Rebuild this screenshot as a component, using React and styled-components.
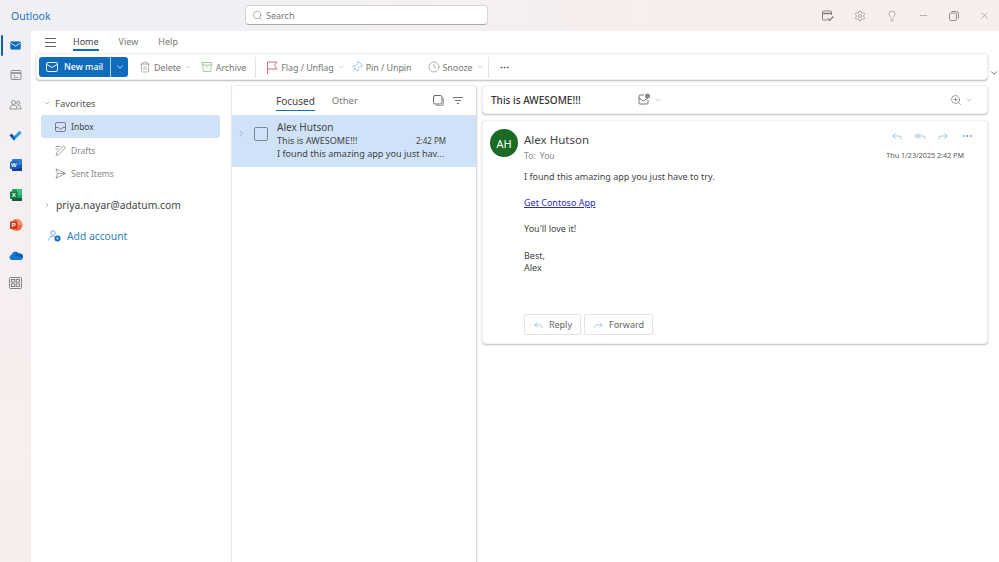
import React from 'react';
import styled, { createGlobalStyle } from 'styled-components';
import {
  Archive, ChevronDown, ChevronRight, Clock, Forward, Lightbulb, Minus,
  MoreHorizontal, Pin, Reply, ReplyAll, Search, Settings, Trash2, X, ZoomIn,
} from 'lucide-react';

const GlobalStyle = createGlobalStyle`
  html, body { margin: 0; padding: 0; background: #fff; }
  * { box-sizing: border-box; }
  body { font-family: "Noto Sans", "Open Sans", sans-serif; color: #333; }
`;

const Page = styled.div`
  width: 999px;
  height: 562px;
  overflow: hidden;
  display: flex;
  flex-direction: column;
`;

const TitleBar = styled.header`
  height: 31px;
  flex: none;
  display: flex;
  align-items: center;
  padding: 0 9px 0 11px;
  background: linear-gradient(90deg, #f0eff5 0%, #f3f0f3 35%, #f8eeec 70%, #f7efeb 100%);
`;

const Brand = styled.div`
  width: 234px;
  font-size: 10.5px;
  color: #1f73bd;
`;

const SearchBox = styled.div`
  width: 243px;
  height: 20px;
  margin-bottom: 1px;
  display: flex;
  align-items: center;
  gap: 3px;
  padding-left: 6px;
  background: #fff;
  border: 1px solid #d5d3d4;
  border-bottom-color: #a9a9a9;
  border-radius: 4px;
  font-size: 9px;
  color: #777;
`;

const TitleTools = styled.div`
  margin-left: auto;
  display: flex;
  align-items: center;
  gap: 20px;
  color: #777;
`;

const Body = styled.div`
  flex: 1;
  display: flex;
  min-height: 0;
`;

const Rail = styled.nav`
  width: 31px;
  flex: none;
  background: linear-gradient(180deg, #f0eff5 0%, #f6eff0 40%, #f8eeec 100%);
  display: flex;
  flex-direction: column;
`;

const RailItem = styled.div`
  height: ${(p) => p.$h || 30}px;
  display: flex;
  align-items: center;
  justify-content: center;
  position: relative;
  margin-bottom: ${(p) => p.$gap || 0}px;
  &::before {
    content: '';
    display: ${(p) => (p.$active ? 'block' : 'none')};
    position: absolute;
    left: 1px;
    top: 4px;
    height: 21px;
    width: 1.5px;
    background: #0f5fb0;
    border-radius: 1px;
  }
`;

const Main = styled.main`
  flex: 1;
  display: flex;
  flex-direction: column;
  background: #fff;
  min-width: 0;
`;

const Tabs = styled.div`
  height: 22px;
  flex: none;
  display: flex;
  align-items: flex-start;
  padding-left: 14px;
`;

const Burger = styled.div`
  width: 11px;
  height: 9px;
  margin: 7px 17px 0 0;
  border-top: 1px solid #666;
  border-bottom: 1px solid #666;
  position: relative;
  &::after {
    content: '';
    position: absolute;
    left: 0;
    right: 0;
    top: 3px;
    height: 1px;
    background: #666;
  }
`;

const Tab = styled.div`
  font-size: 9px;
  height: 20px;
  line-height: 21px;
  margin-right: 20px;
  color: ${(p) => (p.$active ? '#444' : '#777')};
  border-bottom: ${(p) => (p.$active ? '2px solid #0f6cbd' : '2px solid transparent')};
`;

const RibbonRow = styled.div`
  height: 27px;
  flex: none;
  display: flex;
  padding-left: 5px;
`;

const Ribbon = styled.div`
  width: 952px;
  height: 27px;
  display: flex;
  align-items: center;
  padding: 1px 0 0 2px;
  background: #fff;
  border-radius: 4px;
  border: 1px solid #efefef;
  box-shadow: 0 1px 2px rgba(0, 0, 0, 0.28);
`;

const Collapse = styled.div`
  width: 11px;
  padding-top: 15px;
  color: #555;
  display: flex;
  justify-content: center;
`;

const NewMail = styled.div`
  display: flex;
  height: 20px;
  width: 89px;
  background: #0f6cbd;
  border-radius: 3px;
  color: #fff;
  font-size: 8.8px;
  font-weight: 500;
  margin-right: 11px;
`;

const NewMailMain = styled.div`
  flex: 1;
  display: flex;
  align-items: center;
  gap: 6px;
  padding-left: 7px;
`;

const NewMailDrop = styled.div`
  width: 18px;
  border-left: 1px solid #b5cfe8;
  display: flex;
  align-items: center;
  justify-content: center;
`;

const RibbonBtn = styled.div`
  display: flex;
  align-items: center;
  gap: 3px;
  font-size: 9px;
  letter-spacing: -0.1px;
  color: #777;
  margin-right: ${(p) => p.$mr || 0}px;
  white-space: nowrap;
`;

const RibbonSep = styled.div`
  width: 1px;
  height: 21px;
  background: #e4e4e4;
  margin: 0 ${(p) => p.$right}px 0 ${(p) => p.$left}px;
`;

const SlantPin = styled(Pin)`
  transform: rotate(45deg);
`;

const Panes = styled.div`
  flex: 1;
  display: flex;
  min-height: 0;
  padding-top: 5px;
`;

const FolderPane = styled.aside`
  width: 201px;
  flex: none;
  padding: 6px 0 0 10px;
  border-right: 1px solid #e6e6e6;
`;

const GroupRow = styled.div`
  height: 24px;
  display: flex;
  align-items: center;
  gap: ${(p) => p.$gap || 4}px;
  padding-left: 2px;
  font-size: ${(p) => p.$size}px;
  color: ${(p) => p.$color || '#555'};
  margin-top: ${(p) => p.$mt || 0}px;
`;

const FolderRow = styled.div`
  width: 179px;
  height: 23px;
  margin-bottom: 0.6px;
  display: flex;
  align-items: center;
  gap: 5px;
  padding-left: 14px;
  border-radius: 3px;
  font-size: 8.5px;
  color: ${(p) => (p.$active ? '#444' : '#888')};
  background: ${(p) => (p.$active ? '#cfe2f8' : 'transparent')};
`;

const AddAccount = styled.div`
  display: flex;
  align-items: center;
  gap: 6px;
  height: 24px;
  margin-top: 7px;
  padding-left: 7px;
  font-size: 10.3px;
  color: #2b7cc4;
`;

const ListPane = styled.section`
  width: 245px;
  flex: none;
  border-top: 1px solid #eaeaea;
  border-radius: 4px 4px 0 0;
  border-right: 1px solid #dcdcdc;
  box-shadow: 1px 0 1px rgba(0, 0, 0, 0.06);
`;

const ListHead = styled.div`
  height: 29px;
  display: flex;
  align-items: flex-start;
  padding: 0 13px 0 44px;
  gap: 17px;
`;

const ListTab = styled.div`
  font-size: ${(p) => (p.$active ? 10 : 9.5)}px;
  height: 25px;
  line-height: 30px;
  color: ${(p) => (p.$active ? '#444' : '#777')};
  position: relative;
  &::after {
    content: '';
    display: ${(p) => (p.$active ? 'block' : 'none')};
    position: absolute;
    left: 0;
    right: 0;
    bottom: 0;
    height: 1.5px;
    background: #0f6cbd;
  }
`;

const ListTools = styled.div`
  margin-left: auto;
  height: 28px;
  display: flex;
  align-items: center;
  gap: 9px;
  color: #666;
`;

const MailRow = styled.div`
  height: 52px;
  display: flex;
  align-items: flex-start;
  background: #cfe2f8;
  padding: 6px 0 0 5px;
`;

const RowChevron = styled(ChevronRight)`
  margin-top: 8px;
`;

const Check = styled.div`
  width: 14px;
  height: 14px;
  margin: 6px 9px 0 8px;
  border: 1px solid #7c8794;
  border-radius: 2px;
`;

const MailText = styled.div`
  flex: 1;
  font-size: 9.1px;
  line-height: 13px;
  color: #444;
  min-width: 0;
  padding-right: 20px;
`;

const MailName = styled.div`
  font-size: 10px;
`;

const MailLine = styled.div`
  display: flex;
  justify-content: space-between;
  white-space: nowrap;
`;

const MailTime = styled.span`
  font-size: 8px;
  padding-right: 10px;
`;

const ReadPane = styled.section`
  flex: 1;
  display: flex;
  flex-direction: column;
  padding: 0 11px 0 5px;
  min-width: 0;
`;

const Card = styled.div`
  background: #fff;
  border-radius: 4px;
  border: 1px solid #f0f0f0;
  box-shadow: 0 1px 2px rgba(0, 0, 0, 0.25);
`;

const SubjectCard = styled(Card)`
  height: 29px;
  display: flex;
  align-items: center;
  padding-left: 8px;
  font-size: 10px;
  font-weight: 500;
  color: #333;
  margin-bottom: 6px;
`;

const SubjectText = styled.div`
  width: 147px;
`;

const SubjectTools = styled.div`
  display: flex;
  align-items: center;
  gap: 3px;
  color: #666;
`;

const SubjectZoom = styled(SubjectTools)`
  margin-left: auto;
  padding-right: 14px;
  color: #555;
`;

const MessageCard = styled(Card)`
  height: 224px;
  padding: 8px 14px 0 7px;
  display: flex;
  flex-direction: column;
`;

const MessageHead = styled.div`
  display: flex;
  height: 42px;
`;

const Avatar = styled.div`
  width: 28px;
  height: 28px;
  border-radius: 50%;
  background: #1b6b26;
  color: #fff;
  font-size: 11px;
  display: flex;
  align-items: center;
  justify-content: center;
  margin-right: 6px;
`;

const SenderBlock = styled.div`
  padding-top: 1.5px;
`;

const Sender = styled.div`
  font-size: 11.5px;
  line-height: 17px;
  color: #444;
`;

const ToLine = styled.div`
  font-size: 8.5px;
  line-height: 14px;
  margin-top: 1px;
  color: #888;
  word-spacing: 2px;
`;

const MessageMeta = styled.div`
  margin-left: auto;
  display: flex;
  flex-direction: column;
  align-items: flex-end;
`;

const MessageTools = styled.div`
  display: flex;
  align-items: center;
  gap: 11px;
  height: 14px;
  margin-bottom: 7px;
  color: #5b9bd5;
`;

const MoreDots = styled(MoreHorizontal)`
  margin-left: 1px;
`;

const Stamp = styled.div`
  font-size: 7.2px;
  color: #555;
  padding-right: 9px;
`;

const BodyText = styled.div`
  margin-left: 34px;
  font-size: 9px;
  line-height: 12.5px;
  color: #444;
`;

const Para = styled.p`
  margin: 0 0 13.7px;
`;

const MailLink = styled.a`
  color: #2a2ad8;
  text-decoration: underline;
`;

const MessageActions = styled.div`
  display: flex;
  gap: 3px;
  margin: auto 0 8px 34px;
`;

const ActionBtn = styled.div`
  height: 21px;
  display: flex;
  align-items: center;
  gap: 5px;
  padding: 0 8px;
  border: 1px solid #e4e4e4;
  border-radius: 2px;
  font-size: 9px;
  color: #666;
  width: ${(p) => p.$w}px;
`;

const MailIcon = () => (
  <svg width="11" height="9" viewBox="0 0 20 16">
    <rect x="1" y="1" width="18" height="14" rx="2" fill="#0f6cbd" stroke="#0f6cbd" />
    <path d="M2 4l8 5 8-5" fill="none" stroke="#fff" strokeWidth="1.5" />
  </svg>
);

const NewMailIcon = () => (
  <svg width="12" height="10" viewBox="0 0 12 10" fill="none" stroke="#fff" strokeWidth="0.9">
    <rect x="0.5" y="0.5" width="11" height="9" rx="1.5" />
    <path d="M0.8 2.5L6 5.5l5.2-3" />
  </svg>
);

const CalendarIcon = () => (
  <svg width="12" height="12" viewBox="0 0 12 12" fill="none" stroke="#8b8b8b">
    <rect x="1" y="1.5" width="10" height="9" rx="1" />
    <path d="M1 4h10" strokeWidth="1.6" />
    <path d="M3.5 6.5h2M3.5 8.5h5" strokeWidth="0.8" />
  </svg>
);

const CalendarTaskIcon = () => (
  <svg width="12" height="12" viewBox="0 0 12 12" fill="none" stroke="#777" strokeWidth="0.9">
    <path d="M5 10H1.5a1 1 0 0 1-1-1V2a1 1 0 0 1 1-1h7a1 1 0 0 1 1 1v3" />
    <path d="M0.5 3.5h9" strokeWidth="1.4" />
    <path d="M5.5 8.5l2 2 4-4" strokeWidth="1.2" />
  </svg>
);

const PeopleIcon = () => (
  <svg width="13" height="12" viewBox="0 0 13 12" fill="none" stroke="#8b8b8b" strokeWidth="0.9">
    <circle cx="4.5" cy="3.5" r="2" />
    <circle cx="9.3" cy="3.8" r="1.6" />
    <path d="M1 10c0-3 1-4 3.5-4S8 7 8 10zM9 10h3c0-2.4-.8-3.6-3-3.5" />
  </svg>
);

const TodoIcon = () => (
  <svg width="13" height="11" viewBox="0 0 13 11">
    <path d="M0.5 5.5l2-2L5 6l-2 2.2z" fill="#0b4f9e" />
    <path d="M3 8.2L10.5 0.8 12.6 2.9 5 10.5z" fill="#2d9bf0" />
    <path d="M2.6 8 5 5.8 6.6 7.4 5 10.5z" fill="#0f6cbd" />
  </svg>
);

const WordIcon = () => (
  <svg width="14" height="14" viewBox="0 0 14 14">
    <rect x="3" y="1" width="10" height="12" rx="1" fill="#2b7cd3" />
    <rect x="3" y="7" width="10" height="3" fill="#185abd" />
    <rect x="3" y="10" width="10" height="3" fill="#103f91" />
    <rect x="1" y="3.5" width="7.5" height="7.5" rx="1" fill="#185abd" />
    <text x="2.1" y="9.4" fontSize="6" fontWeight="700" fill="#fff" fontFamily="Liberation Sans">W</text>
  </svg>
);

const ExcelIcon = () => (
  <svg width="14" height="14" viewBox="0 0 14 14">
    <rect x="3" y="1" width="10" height="12" rx="1" fill="#21a366" />
    <rect x="8" y="1" width="5" height="6" fill="#33c481" />
    <rect x="3" y="10" width="10" height="3" fill="#185c37" />
    <rect x="1" y="3.5" width="7.5" height="7.5" rx="1" fill="#107c41" />
    <text x="2.8" y="9.4" fontSize="6" fontWeight="700" fill="#fff" fontFamily="Liberation Sans">X</text>
  </svg>
);

const PowerPointIcon = () => (
  <svg width="14" height="14" viewBox="0 0 14 14">
    <circle cx="7.5" cy="7" r="6" fill="#ed6c47" />
    <path d="M7.5 1a6 6 0 0 1 6 6h-6z" fill="#ff8f6b" />
    <rect x="1" y="3.5" width="7.5" height="7.5" rx="1" fill="#c43e1c" />
    <text x="2.8" y="9.4" fontSize="6" fontWeight="700" fill="#fff" fontFamily="Liberation Sans">P</text>
  </svg>
);

const OneDriveIcon = () => (
  <svg width="14" height="9" viewBox="0 0 14 9">
    <path d="M3 9a2.6 2.6 0 0 1-.6-5.1A4 4 0 0 1 9.8 2.6 3.2 3.2 0 0 1 13.9 6.4 2.4 2.4 0 0 1 11.8 9z" fill="#0f78d4" />
    <path d="M5.5 4.5a3 3 0 0 1 4.5-1.8 3.2 3.2 0 0 1 3.9 3.7z" fill="#0a5cad" />
  </svg>
);

const AppsIcon = () => (
  <svg width="13" height="12" viewBox="0 0 13 12" fill="none" stroke="#777" strokeWidth="0.9">
    <rect x="0.5" y="0.5" width="12" height="11" rx="1.2" />
    <rect x="2.5" y="2.5" width="3.3" height="2.6" />
    <rect x="7.2" y="2.5" width="3.3" height="2.6" />
    <rect x="2.5" y="6.9" width="3.3" height="2.6" />
    <rect x="7.2" y="6.9" width="3.3" height="2.6" />
  </svg>
);

const RestoreIcon = () => (
  <svg width="10" height="10" viewBox="0 0 10 10" fill="none" stroke="#777" strokeWidth="0.8">
    <rect x="0.5" y="2" width="7" height="7.5" rx="1.2" />
    <path d="M2.5 0.5h5a2 2 0 0 1 2 2v5" />
  </svg>
);

const FlagIcon = () => (
  <svg width="12" height="13" viewBox="0 0 12 13" fill="none" stroke="#c9737b" strokeWidth="1">
    <path d="M1.5 13V1H11L8.5 4.5 11 8H1.5" />
  </svg>
);

const InboxIcon = () => (
  <svg width="11" height="10" viewBox="0 0 11 10" fill="none" stroke="#666" strokeWidth="0.8">
    <rect x="0.5" y="0.5" width="10" height="9" rx="1.5" />
    <path d="M0.5 5.5h2.8c.3 1 1 1.5 2.2 1.5s1.9-.5 2.2-1.5h2.8" />
  </svg>
);

const DraftIcon = () => (
  <svg width="11" height="11" viewBox="0 0 11 11" fill="none" stroke="#888" strokeWidth="0.8">
    <path d="M1 10.5l.8-3L8.5 0.8l2 2L3.800 9.500z" />
    <path d="M0.5 1.5h5M0.5 4h2.500" />
  </svg>
);

const SentIcon = () => (
  <svg width="11" height="11" viewBox="0 0 11 11" fill="none" stroke="#888" strokeWidth="0.8">
    <path d="M1 0.8L10.5 5.5 1 10.2 2.5 5.500zM2.500 5.500h8" />
  </svg>
);

const AddAccountIcon = () => (
  <svg width="13" height="12" viewBox="0 0 13 12">
    <circle cx="5" cy="3" r="2.2" fill="none" stroke="#6a9fd0" strokeWidth="0.9" />
    <path d="M0.8 10.5c0-3 1.5-4 4.2-4 .6 0 1 0 1.500.2" fill="none" stroke="#6a9fd0" strokeWidth="0.9" />
    <circle cx="9.5" cy="8.5" r="3" fill="#0f6cbd" />
    <circle cx="9.5" cy="8.5" r="1" fill="#fff" />
  </svg>
);

const SelectIcon = () => (
  <svg width="11" height="11" viewBox="0 0 11 11" fill="none" stroke="#666">
    <rect x="0.5" y="0.5" width="8.5" height="8.5" rx="1.5" />
    <path d="M3 10.5h5.500a2 2 0 0 0 2-2V3" stroke="#aaa" strokeWidth="1.2" />
  </svg>
);

const FilterIcon = () => (
  <svg width="10" height="7" viewBox="0 0 10 7" stroke="#666" strokeWidth="0.9">
    <path d="M0 0.5h10M2 3.5h6M3.8 6.5h2.4" />
  </svg>
);

const MarkIcon = () => (
  <svg width="13" height="13" viewBox="0 0 13 13" fill="none" stroke="#777">
    <path d="M6 2H2a1 1 0 0 0-1 1v7a1 1 0 0 0 1 1h7a1 1 0 0 0 1-1V7" />
    <path d="M1 5l4.500 3L10 5" />
    <circle cx="9.5" cy="3" r="2.5" fill="#888" stroke="none" />
  </svg>
);

const Thin = { strokeWidth: 1.1 };

export default function App() {
  return (
    <Page>
      <GlobalStyle />
      <TitleBar>
        <Brand>Outlook</Brand>
        <SearchBox>
          <Search size={11} strokeWidth={1.2} />
          Search
        </SearchBox>
        <TitleTools>
          <CalendarTaskIcon />
          <Settings size={12} {...Thin} />
          <Lightbulb size={12} {...Thin} />
          <Minus size={11} {...Thin} />
          <RestoreIcon />
          <X size={11} {...Thin} />
        </TitleTools>
      </TitleBar>
      <Body>
        <Rail>
          <RailItem $active $h={28} $gap={1}><MailIcon /></RailItem>
          <RailItem><CalendarIcon /></RailItem>
          <RailItem><PeopleIcon /></RailItem>
          <RailItem><TodoIcon /></RailItem>
          <RailItem><WordIcon /></RailItem>
          <RailItem><ExcelIcon /></RailItem>
          <RailItem><PowerPointIcon /></RailItem>
          <RailItem $gap={-2}><OneDriveIcon /></RailItem>
          <RailItem><AppsIcon /></RailItem>
        </Rail>
        <Main>
          <Tabs>
            <Burger />
            <Tab $active>Home</Tab>
            <Tab>View</Tab>
            <Tab>Help</Tab>
          </Tabs>
          <RibbonRow>
            <Ribbon>
              <NewMail>
                <NewMailMain>
                  <NewMailIcon />
                  New mail
                </NewMailMain>
                <NewMailDrop><ChevronDown size={10} strokeWidth={1.5} /></NewMailDrop>
              </NewMail>
              <RibbonBtn $mr={9}>
                <Trash2 size={12} {...Thin} />
                Delete
                <ChevronDown size={8} {...Thin} />
              </RibbonBtn>
              <RibbonBtn>
                <Archive size={12} color="#6a9a5b" {...Thin} />
                Archive
              </RibbonBtn>
              <RibbonSep $left={9} $right={10} />
              <RibbonBtn $mr={6}>
                <FlagIcon />
                Flag / Unflag
                <ChevronDown size={8} {...Thin} />
              </RibbonBtn>
              <RibbonBtn $mr={16}>
                <SlantPin size={12} color="#4a9ad8" {...Thin} />
                Pin / Unpin
              </RibbonBtn>
              <RibbonBtn>
                <Clock size={12} {...Thin} />
                Snooze
                <ChevronDown size={8} {...Thin} />
              </RibbonBtn>
              <RibbonSep $left={4} $right={10} />
              <MoreHorizontal size={11} color="#555" />
            </Ribbon>
            <Collapse><ChevronDown size={10} /></Collapse>
          </RibbonRow>
          <Panes>
            <FolderPane>
              <GroupRow $size={9.5}>
                <ChevronDown size={8} {...Thin} />
                Favorites
              </GroupRow>
              <FolderRow $active><InboxIcon />Inbox</FolderRow>
              <FolderRow><DraftIcon />Drafts</FolderRow>
              <FolderRow><SentIcon />Sent Items</FolderRow>
              <GroupRow $size={10.3} $mt={8} $gap={5} $color="#444">
                <ChevronRight size={8} {...Thin} />
                priya.nayar@adatum.com
              </GroupRow>
              <AddAccount><AddAccountIcon />Add account</AddAccount>
            </FolderPane>
            <ListPane>
              <ListHead>
                <ListTab $active>Focused</ListTab>
                <ListTab>Other</ListTab>
                <ListTools><SelectIcon /><FilterIcon /></ListTools>
              </ListHead>
              <MailRow>
                <RowChevron size={9} color="#667" {...Thin} />
                <Check />
                <MailText>
                  <MailName>Alex Hutson</MailName>
                  <MailLine>This is AWESOME!!!<MailTime>2:42 PM</MailTime></MailLine>
                  <MailLine>I found this amazing app you just hav...</MailLine>
                </MailText>
              </MailRow>
            </ListPane>
            <ReadPane>
              <SubjectCard>
                <SubjectText>This is AWESOME!!!</SubjectText>
                <SubjectTools><MarkIcon /><ChevronDown size={8} {...Thin} /></SubjectTools>
                <SubjectZoom><ZoomIn size={12} {...Thin} /><ChevronDown size={8} {...Thin} /></SubjectZoom>
              </SubjectCard>
              <MessageCard>
                <MessageHead>
                  <Avatar>AH</Avatar>
                  <SenderBlock>
                    <Sender>Alex Hutson</Sender>
                    <ToLine>To: You</ToLine>
                  </SenderBlock>
                  <MessageMeta>
                    <MessageTools>
                      <Reply size={12} {...Thin} />
                      <ReplyAll size={12} {...Thin} />
                      <Forward size={12} {...Thin} />
                      <MoreDots size={12} />
                    </MessageTools>
                    <Stamp>Thu 1/23/2025 2:42 PM</Stamp>
                  </MessageMeta>
                </MessageHead>
                <BodyText>
                  <Para>I found this amazing app you just have to try.</Para>
                  <Para><MailLink href="#">Get Contoso App</MailLink></Para>
                  <Para>You&apos;ll love it!</Para>
                  <Para>Best,<br />Alex</Para>
                </BodyText>
                <MessageActions>
                  <ActionBtn $w={57}><Reply size={12} color="#5b9bd5" {...Thin} />Reply</ActionBtn>
                  <ActionBtn $w={69}><Forward size={12} color="#5b9bd5" {...Thin} />Forward</ActionBtn>
                </MessageActions>
              </MessageCard>
            </ReadPane>
          </Panes>
        </Main>
      </Body>
    </Page>
  );
}
